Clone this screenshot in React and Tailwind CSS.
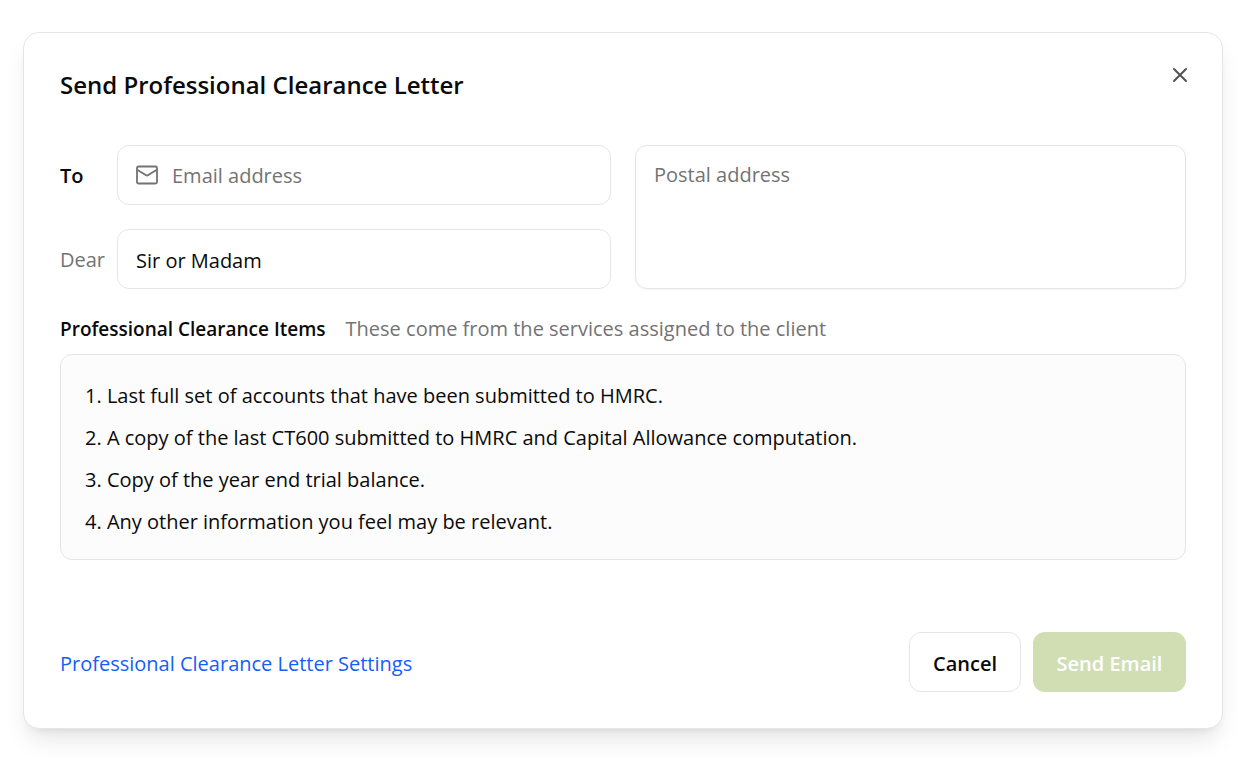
import React, { useState } from 'react';

const ITEMS = [
    'Last full set of accounts that have been submitted to HMRC.',
    'A copy of the last CT600 submitted to HMRC and Capital Allowance computation.',
    'Copy of the year end trial balance.',
    'Any other information you feel may be relevant.',
];

const MailIcon = () => (
    <svg className="size-6 shrink-0 text-neutral-500" viewBox="0 0 24 24" fill="none" stroke="currentColor" strokeWidth="1.8" strokeLinecap="round" strokeLinejoin="round" aria-hidden="true">
        <rect x="1" y="3.5" width="20" height="17" rx="1.5" />
        <path d="M1.5 7l8.2 5.1a2.4 2.4 0 0 0 2.6 0l8.2-5.1" />
    </svg>
);

const CloseIcon = () => (
    <svg className="size-6" viewBox="0 0 24 24" fill="none" stroke="currentColor" strokeWidth="2" strokeLinecap="round" aria-hidden="true">
        <path d="M6 6l12 12M18 6L6 18" />
    </svg>
);

export default function App() {
    const [email, setEmail] = useState('');
    const [salutation, setSalutation] = useState('Sir or Madam');
    const [postal, setPostal] = useState('');

    return (
        <div className="min-h-screen bg-white py-8 pr-[22px] pl-[23px] font-['Open_Sans','Noto_Sans',sans-serif] text-xl text-neutral-950">
            <form
                role="dialog"
                aria-labelledby="dialog-title"
                className="rounded-2xl border border-neutral-200 bg-white p-9 shadow-[0_15px_23px_-5px_rgb(0_0_0/0.1),0_6px_9px_-6px_rgb(0_0_0/0.1)]"
                onSubmit={e => e.preventDefault()}
            >
                <header className="flex items-start justify-between">
                    <h1 id="dialog-title" className="text-2xl leading-8 font-semibold">
                        Send Professional Clearance Letter
                    </h1>
                    <button type="button" aria-label="Close" className="-mt-1.5 -mr-1.5 text-neutral-600">
                        <CloseIcon />
                    </button>
                </header>

                <div className="mt-11 grid grid-cols-2 gap-6">
                    <div className="flex flex-col gap-6">
                        <div className="flex items-center">
                            <label htmlFor="to" className="w-[57px] shrink-0 pt-0.5 font-semibold">To</label>
                            <div className="flex h-[60px] min-w-0 flex-1 items-center gap-3 rounded-xl border border-neutral-200 px-[18px]">
                                <MailIcon />
                                <input
                                    id="to"
                                    type="email"
                                    placeholder="Email address"
                                    value={email}
                                    onChange={e => setEmail(e.target.value)}
                                    className="min-w-0 flex-1 pt-0.5 outline-none placeholder:text-neutral-500"
                                />
                            </div>
                        </div>
                        <div className="flex items-center">
                            <label htmlFor="dear" className="w-[57px] shrink-0 pt-0.5 text-neutral-500">Dear</label>
                            <input
                                id="dear"
                                type="text"
                                value={salutation}
                                onChange={e => setSalutation(e.target.value)}
                                className="h-[60px] min-w-0 flex-1 rounded-xl border border-neutral-200 px-[18px] pt-0.5 outline-none"
                            />
                        </div>
                    </div>
                    <textarea
                        aria-label="Postal address"
                        placeholder="Postal address"
                        value={postal}
                        onChange={e => setPostal(e.target.value)}
                        className="resize-none rounded-xl border border-neutral-200 px-[18px] py-[15px] shadow-xs outline-none placeholder:text-neutral-500"
                    />
                </div>

                <section className="mt-6">
                    <div className="flex items-center gap-5 leading-8">
                        <h2 className="text-[19px] leading-8 font-semibold">Professional Clearance Items</h2>
                        <p className="text-neutral-500">These come from the services assigned to the client</p>
                    </div>
                    <ol className="mt-[9px] rounded-xl border border-neutral-200 bg-[#fcfcfc] px-6 pt-5 pb-4">
                        {ITEMS.map((item, i) => (
                            <li key={item} className="leading-[42px]">{i + 1}. {item}</li>
                        ))}
                    </ol>
                </section>

                <footer className="mt-18 flex items-center justify-between">
                    <a href="#settings" className="pt-1 text-blue-600">Professional Clearance Letter Settings</a>
                    <div className="flex gap-3">
                        <button type="button" className="h-[60px] w-28 rounded-xl border border-neutral-200 pt-1 font-semibold">
                            Cancel
                        </button>
                        <button type="submit" disabled={!email} className="h-[60px] w-[153px] rounded-xl bg-[#a2bc68] pt-1 font-semibold text-white disabled:bg-[#d1deb4]">
                            Send Email
                        </button>
                    </div>
                </footer>
            </form>
        </div>
    );
}
